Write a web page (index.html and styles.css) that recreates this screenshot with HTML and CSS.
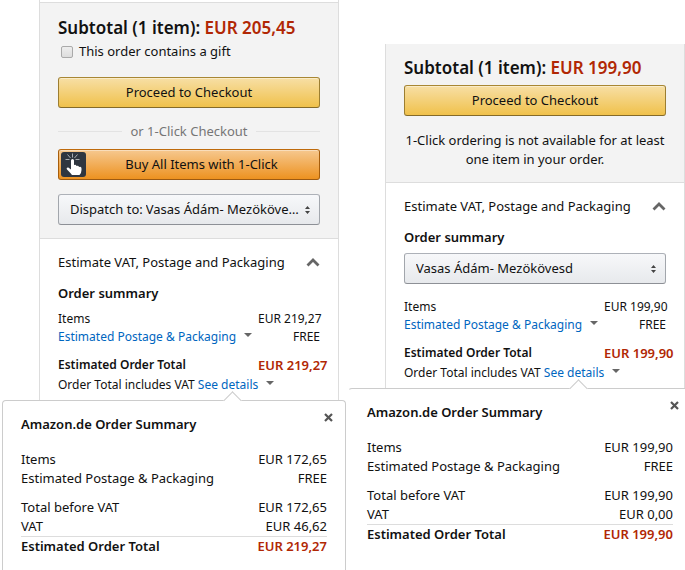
FILE: index.html
```
<!DOCTYPE html>
<html lang="en">
<head>
    <meta charset="UTF-8">
    <meta name="viewport" content="width=device-width, initial-scale=1.0">
    <title>Shopping Basket</title>
    <link rel="stylesheet" href="styles.css">
</head>
<body>
    <div class="page">
        <section class="column">
            <div class="cart">
                <div class="checkout checkout-first">
                    <h2 class="subtotal">Subtotal (1 item): <span class="price">EUR 205,45</span></h2>
                    <label class="gift"><input type="checkbox" class="gift-box">This order contains a gift</label>
                    <button class="button button-gift">Proceed to Checkout</button>
                    <div class="divider">or 1-Click Checkout</div>
                    <button class="button button-oneclick">
                        <svg class="oneclick-icon" width="25" height="25" viewBox="0 0 25 25" aria-hidden="true">
                            <rect width="25" height="25" rx="3" fill="#2f3640"/>
                            <path d="M11.5 1.5v4M6.5 2.5l3 3.5M16.500 2.500l-3 3.500M4.500 7.500h4M14.500 7.500h4" fill="none" stroke="#a9adb3" stroke-width="1"/>
                            <path d="M10 8.500a1.500 1.500 0 0 1 3 0V13q2-1 2.500 1 2-1 2.500 1 2.500-.8 2.500 1.500V18q0 3-2 5h-7.500q-1.500-2-5-5.500c-1-1.500.5-2.500 2-1.500l2 1.500z" fill="#fff"/>
                        </svg>
                        <span class="button-text">Buy All Items with 1-Click</span>
                    </button>
                    <div class="dropdown">
                        <label for="dispatch" class="dropdown-label">Dispatch to:</label>
                        <select id="dispatch" class="dropdown-select">
                            <option>Vasas Ádám- Mezökövesd</option>
                        </select>
                        <svg class="dropdown-arrows" width="5" height="8" viewBox="0 0 5 8" aria-hidden="true"><path d="M0 3l2.500-3L5 3zM0 5l2.500 3L5 5z" fill="#444"/></svg>
                    </div>
                </div>
                <div class="estimate">
                    <button class="expander">
                        Estimate VAT, Postage and Packaging
                        <svg width="14" height="9" viewBox="0 0 14 9" aria-hidden="true"><path d="M1.500 7.500L7 2l5.500 5.500" fill="none" stroke="#666" stroke-width="2.800"/></svg>
                    </button>
                    <h3 class="summary-title">Order summary</h3>
                    <table class="summary">
                        <tr><td>Items</td><td class="amount">EUR 219,27</td></tr>
                        <tr><td><a href="#" class="link caret">Estimated Postage &amp; Packaging</a></td><td class="amount">FREE</td></tr>
                        <tr class="total"><th>Estimated Order Total</th><td class="amount price">EUR 219,27</td></tr>
                    </table>
                    <p class="vat-note">Order Total includes VAT <a href="#" class="link caret">See details</a></p>
                </div>
            </div>
            <div class="popover">
                <div class="popover-head">
                    <h3 class="popover-title">Amazon.de Order Summary</h3>
                    <button class="close" aria-label="Close">
                        <svg width="9" height="9" viewBox="0 0 9 9" aria-hidden="true"><path d="M1 1l7 7M8 1L1 8" stroke="#555" stroke-width="2.200"/></svg>
                    </button>
                </div>
                <table class="details">
                    <tr><td>Items</td><td class="amount">EUR 172,65</td></tr>
                    <tr><td>Estimated Postage &amp; Packaging</td><td class="amount">FREE</td></tr>
                    <tr class="before-vat"><td>Total before VAT</td><td class="amount">EUR 172,65</td></tr>
                    <tr><td>VAT</td><td class="amount">EUR 46,62</td></tr>
                    <tr class="details-total"><th>Estimated Order Total</th><td class="amount price">EUR 219,27</td></tr>
                </table>
            </div>
        </section>

        <section class="column column-second">
            <div class="cart">
                <div class="checkout">
                    <h2 class="subtotal">Subtotal (1 item): <span class="price">EUR 199,90</span></h2>
                    <button class="button">Proceed to Checkout</button>
                    <p class="unavailable">1-Click ordering is not available for at least one item in your order.</p>
                </div>
                <div class="estimate">
                    <button class="expander">
                        Estimate VAT, Postage and Packaging
                        <svg width="14" height="9" viewBox="0 0 14 9" aria-hidden="true"><path d="M1.500 7.500L7 2l5.500 5.500" fill="none" stroke="#666" stroke-width="2.800"/></svg>
                    </button>
                    <h3 class="summary-title">Order summary</h3>
                    <div class="dropdown dropdown-address">
                        <select class="dropdown-select" aria-label="Address">
                            <option>Vasas Ádám- Mezökövesd</option>
                        </select>
                        <svg class="dropdown-arrows" width="5" height="8" viewBox="0 0 5 8" aria-hidden="true"><path d="M0 3l2.500-3L5 3zM0 5l2.500 3L5 5z" fill="#444"/></svg>
                    </div>
                    <table class="summary">
                        <tr><td>Items</td><td class="amount">EUR 199,90</td></tr>
                        <tr><td><a href="#" class="link caret">Estimated Postage &amp; Packaging</a></td><td class="amount">FREE</td></tr>
                        <tr class="total"><th>Estimated Order Total</th><td class="amount price">EUR 199,90</td></tr>
                    </table>
                    <p class="vat-note">Order Total includes VAT <a href="#" class="link caret">See details</a></p>
                </div>
            </div>
            <div class="popover">
                <div class="popover-head">
                    <h3 class="popover-title">Amazon.de Order Summary</h3>
                    <button class="close" aria-label="Close">
                        <svg width="9" height="9" viewBox="0 0 9 9" aria-hidden="true"><path d="M1 1l7 7M8 1L1 8" stroke="#555" stroke-width="2.200"/></svg>
                    </button>
                </div>
                <table class="details">
                    <tr><td>Items</td><td class="amount">EUR 199,90</td></tr>
                    <tr><td>Estimated Postage &amp; Packaging</td><td class="amount">FREE</td></tr>
                    <tr class="before-vat"><td>Total before VAT</td><td class="amount">EUR 199,90</td></tr>
                    <tr><td>VAT</td><td class="amount">EUR 0,00</td></tr>
                    <tr class="details-total"><th>Estimated Order Total</th><td class="amount price">EUR 199,90</td></tr>
                </table>
            </div>
        </section>
    </div>
</body>
</html>
```
FILE: styles.css
```
* {
    box-sizing: border-box;
}

body {
    margin: 0;
    background: #fff;
    color: #111;
    font-family: "Noto Sans", "Open Sans", sans-serif;
    font-size: 13px;
    line-height: 19px;
    overflow-x: hidden;
}

h2, h3, p {
    margin: 0;
}

button, select {
    font: inherit;
    color: inherit;
}

.page {
    display: grid;
    grid-template-columns: repeat(2, minmax(344px, 1fr));
    gap: 2px;
    min-height: 100vh;
    padding-left: 2px;
}

.column {
    display: flex;
    flex-direction: column;
}

.column-second {
    padding-top: 44px;
}

.cart {
    margin: 0 7px 0 37px;
    border: solid #ddd;
    border-width: 0 1px;
}

/* Checkout box */
.checkout {
    padding: 12px 18px 13px;
    background: #f3f3f3;
    border-bottom: 1px solid #ddd;
}

.checkout-first {
    margin-top: 2px;
    padding-top: 13px;
    border-top: 1px solid #ddd;
}

.subtotal {
    font-size: 17px;
    line-height: 24px;
    font-weight: 600;
    white-space: nowrap;
}

.price {
    color: #b12704;
}

.gift {
    display: flex;
    align-items: center;
    gap: 6px;
    margin-top: 2px;
}

.gift-box {
    appearance: none;
    width: 12px;
    height: 12px;
    margin: 0 0 0 3px;
    border: 1px solid #aaa;
    border-radius: 2px;
    background: linear-gradient(#eee, #ddd);
}

.button {
    display: flex;
    align-items: center;
    justify-content: center;
    width: 100%;
    height: 31px;
    margin-top: 5px;
    padding: 0 2px;
    border: 1px solid;
    border-color: #a88734 #9c7e31 #846a29;
    border-radius: 3px;
    background: linear-gradient(#f7dfa5, #f0c14b);
    box-shadow: inset 0 1px 0 rgba(255, 255, 255, 0.4);
    cursor: pointer;
}

.button-gift {
    margin-top: 16px;
}

.unavailable {
    margin-top: 15px;
    text-align: center;
}

.divider {
    display: flex;
    align-items: center;
    gap: 8px;
    margin: 14px 0 8px;
    color: #767676;
}

.divider::before,
.divider::after {
    content: "";
    flex: 1;
    height: 1px;
    background: #e3e3e3;
}

.button-oneclick {
    margin-top: 0;
    border-color: #be6a0c #a65d0b #9c5a12;
    background: linear-gradient(#f6c88f, #ed9220);
}

.button-text {
    flex: 1;
}

.dropdown {
    display: flex;
    align-items: center;
    gap: 3px;
    height: 31px;
    margin-top: 14px;
    padding: 0 9px 0 11px;
    border: 1px solid;
    border-color: #adb1b8 #a2a6ac #8d9096;
    border-radius: 3px;
    background: linear-gradient(#f7f8fa, #e7e9ec);
}

.dropdown-address {
    margin-top: 6px;
}

.dropdown-label {
    white-space: nowrap;
}

.dropdown-select {
    appearance: none;
    flex: 1;
    min-width: 0;
    padding: 0;
    border: 0;
    background: none;
    text-overflow: ellipsis;
}

.dropdown-arrows {
    flex: none;
}

/* Estimate box */
.estimate {
    padding: 14px 18px 6px;
}

.expander {
    display: flex;
    align-items: center;
    justify-content: space-between;
    width: 100%;
    padding: 0;
    border: 0;
    background: none;
    white-space: nowrap;
    cursor: pointer;
}

.summary-title {
    margin-top: 12px;
    font-size: 13px;
    font-weight: 600;
}

.summary {
    width: 100%;
    margin-top: 7px;
    table-layout: fixed;
    border-collapse: collapse;
    font-size: 12px;
    line-height: 18px;
}

.dropdown + .summary {
    margin-top: 14px;
}

td, th {
    padding: 0;
    text-align: left;
    font-weight: 400;
    white-space: nowrap;
}

.amount {
    text-align: right;
}

.summary .amount {
    width: 62px;
}

.total th,
.total td {
    padding-top: 10px;
    font-weight: 600;
}

.total .price {
    font-size: 13px;
}

.link {
    color: #0066c0;
    text-decoration: none;
}

.caret::after {
    content: "";
    display: inline-block;
    margin-left: 8px;
    border: 4px solid transparent;
    border-top-color: #666;
    border-bottom: 0;
    vertical-align: 4px;
}

.vat-note {
    margin-top: 2px;
    font-size: 12px;
    line-height: 18px;
    white-space: nowrap;
}

/* Order summary popover */
.popover {
    position: relative;
    flex: 1;
    padding: 14px 18px;
    border: 1px solid #ccc;
    border-bottom: 0;
    border-radius: 4px 4px 0 0;
    background: #fff;
}

.column-second .popover {
    border-left-color: transparent;
}

.popover::before {
    content: "";
    position: absolute;
    top: -7px;
    left: 223px;
    width: 12px;
    height: 12px;
    border: solid #ccc;
    border-width: 1px 0 0 1px;
    background: #fff;
    transform: rotate(45deg);
}

.popover-head {
    display: flex;
    justify-content: space-between;
}

.popover-title {
    font-size: 13px;
    font-weight: 600;
}

.close {
    display: flex;
    margin: -2px -6px 0 0;
    padding: 0;
    border: 0;
    background: none;
    cursor: pointer;
}

.details {
    width: 100%;
    margin-top: 16px;
    border-collapse: collapse;
}

.before-vat td {
    padding-top: 10px;
}

.details-total th,
.details-total td {
    border-top: 1px solid #ddd;
    font-weight: 600;
}
```
